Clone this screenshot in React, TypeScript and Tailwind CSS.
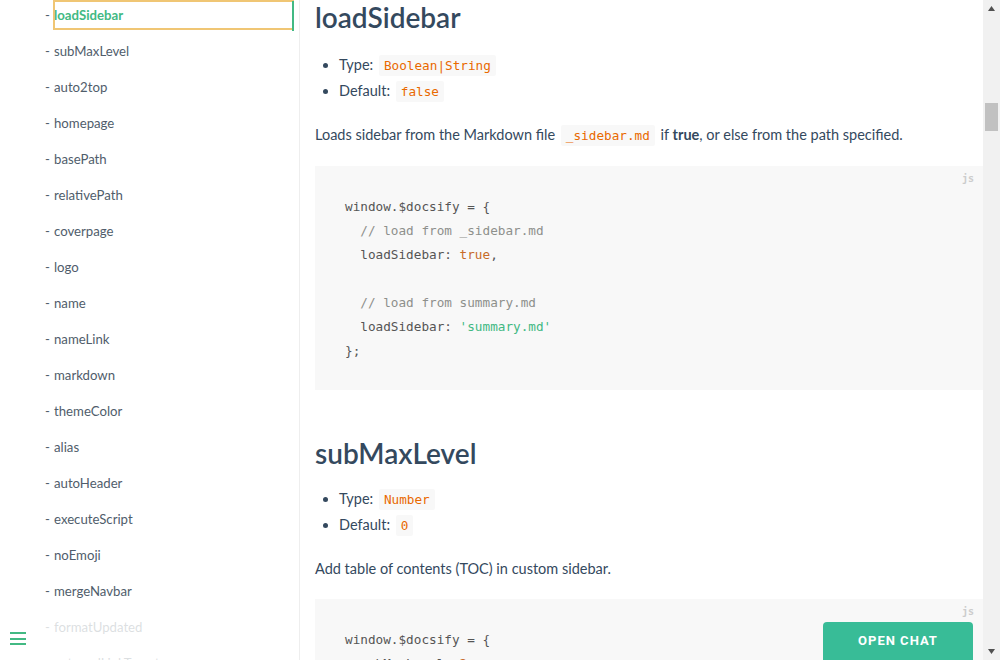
import React from "react";

const items = [
  "loadSidebar",
  "subMaxLevel",
  "auto2top",
  "homepage",
  "basePath",
  "relativePath",
  "coverpage",
  "logo",
  "name",
  "nameLink",
  "markdown",
  "themeColor",
  "alias",
  "autoHeader",
  "executeScript",
  "noEmoji",
  "mergeNavbar",
  "formatUpdated",
  "externalLinkTarget",
];

const sans = { fontFamily: "Lato, 'Noto Sans', sans-serif" };
const mono = { fontFamily: "'DejaVu Sans Mono', 'Liberation Mono', monospace" };

function Code({ children }: { children: React.ReactNode }) {
  return (
    <code
      className="mx-[2px] rounded-[2px] bg-[#f8f8f8] px-[5px] py-[3px] text-[12.7px] text-[#e96900]"
      style={mono}
    >
      {children}
    </code>
  );
}

function Bullet({ children }: { children: React.ReactNode }) {
  return (
    <li className="flex h-[26px] items-center">
      <span className="mr-[11px] ml-[5px] h-[5px] w-[5px] shrink-0 rounded-full bg-[#34495e]" />
      <span className="whitespace-pre">{children}</span>
    </li>
  );
}

function CodeBlock({ lines }: { lines: React.ReactNode[] }) {
  return (
    <div className="relative mr-[-15px] bg-[#f8f8f8] pl-[30px] pt-[29px] pb-[27px]" style={mono}>
      <span className="absolute right-[9px] top-[5px] text-[10px] font-bold text-[#ccc]">js</span>
      {lines.map((l, i) => (
        <div key={i} className="h-[24px] whitespace-pre text-[12.7px] leading-[24px] text-[#555]">
          {l}
        </div>
      ))}
    </div>
  );
}

export default function App() {
  return (
    <div className="flex h-[660px] w-[1000px] overflow-hidden bg-white text-[#34495e]" style={sans}>
      <aside className="relative h-full w-[300px] shrink-0 overflow-hidden border-r border-[#eee]">
        <ul className="flex flex-col gap-[6px] pt-0">
          {items.map((it, i) => (
            <li key={it} className="flex h-[30px] items-center pt-[2px] text-[13.2px] text-[#505d6b]">
              <span className="ml-[45px] w-[8px]">-</span>
              {i === 0 ? (
                <span className="box-border -mt-[2px] flex h-[30px] w-[241px] items-center border-2 border-r-0 border-[#f0c674] pt-[2px] font-bold text-[#42b983]">
                  <span className="ml-[-1px] flex-1">{it}</span>
                  <span className="h-[30px] w-[2px] bg-[#42b983] -my-[2px]" />
                </span>
              ) : (
                <span className="ml-px">{it}</span>
              )}
            </li>
          ))}
        </ul>
        <div className="absolute bottom-0 left-0 h-[40px] w-[284px] bg-white/80 p-[10px]">
          <div className="mt-[2px] flex w-[16px] flex-col gap-[3.5px]">
            <span className="h-[2px] w-[16px] bg-[#42b983]" />
            <span className="h-[2px] w-[16px] bg-[#42b983]" />
            <span className="h-[2px] w-[16px] bg-[#42b983]" />
          </div>
        </div>
      </aside>

      <main className="relative flex-1 overflow-hidden pl-[15px] pr-[15px] text-[14.5px]">
        <h2 className="mt-0 h-[34px] text-[28px] font-semibold leading-[34px] text-[#34495e]">loadSidebar</h2>
        <ul className="mt-[18px] ml-[3px]">
          <Bullet>
            Type: <Code>Boolean|String</Code>
          </Bullet>
          <Bullet>
            Default: <Code>false</Code>
          </Bullet>
        </ul>
        <p className="mt-[18px] h-[26px] leading-[26px]">
          Loads sidebar from the Markdown file <Code>_sidebar.md</Code> if <strong className="font-bold">true</strong>, or else from the path specified.
        </p>
        <div className="mt-[18px]">
          <CodeBlock
            lines={[
              "window.$docsify = {",
              <span className="text-[#8e908c]">{"  // load from _sidebar.md"}</span>,
              <>
                {"  loadSidebar: "}
                <span className="text-[#c76b29]">true</span>,
              </>,
              "",
              <span className="text-[#8e908c]">{"  // load from summary.md"}</span>,
              <>
                {"  loadSidebar: "}
                <span className="text-[#42b983]">'summary.md'</span>
              </>,
              "};",
            ]}
          />
        </div>

        <h2 className="mt-[46px] h-[34px] text-[28px] font-semibold leading-[34px] text-[#34495e]">subMaxLevel</h2>
        <ul className="mt-[16px] ml-[3px]">
          <Bullet>
            Type: <Code>Number</Code>
          </Bullet>
          <Bullet>
            Default: <Code>0</Code>
          </Bullet>
        </ul>
        <p className="mt-[18px] h-[26px] leading-[26px]">Add table of contents (TOC) in custom sidebar.</p>
        <div className="mt-[17px]">
          <CodeBlock
            lines={[
              "window.$docsify = {",
              <>
                {"  subMaxLevel: "}
                <span className="text-[#c76b29]">2</span>,
              </>,
              "};",
            ]}
          />
        </div>

        <button
          className="absolute bottom-0 right-[10px] h-[38px] w-[150px] rounded-t-[4px] bg-[#38bc97] text-[13px] font-bold tracking-[1px] text-white"
          style={{ fontFamily: "Roboto, 'Liberation Sans', sans-serif" }}
        >
          OPEN CHAT
        </button>
      </main>

      <div className="flex h-full w-[17px] shrink-0 flex-col items-center bg-[#f1f1f1]">
        <svg width="9" height="17" viewBox="0 0 9 17" className="shrink-0">
          <path d="M1 11 L4.5 6 L8 11 Z" fill="#505050" />
        </svg>
        <div className="mt-[86px] h-[28px] w-[13px] bg-[#c1c1c1]" />
        <div className="flex-1" />
        <svg width="9" height="17" viewBox="0 0 9 17" className="shrink-0">
          <path d="M1 6 L8 6 L4.5 11 Z" fill="#505050" />
        </svg>
      </div>
    </div>
  );
}
